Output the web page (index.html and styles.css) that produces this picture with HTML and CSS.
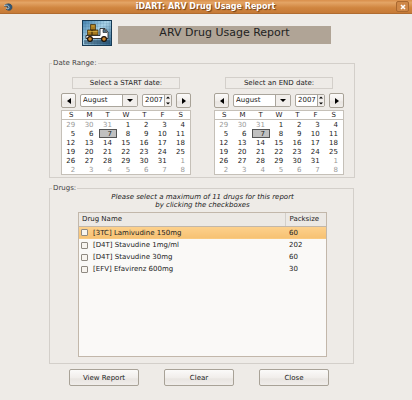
FILE: index.html
```html
<!DOCTYPE html>
<html lang="en">
<head>
<meta charset="utf-8">
<title>iDART: ARV Drug Usage Report</title>
<link rel="stylesheet" href="styles.css">
</head>
<body>
<header class="titlebar">
  <svg class="app-icon" viewBox="0 0 12 10" aria-hidden="true"><path d="M1 4C3 1 9 1 9 5S5 9 3 7C5 7 6 4 1 4Z" fill="#315878" stroke="#234158" stroke-width=".6"/><path d="M1 3.500c3-1 5 0 5 2S4 7 3 6" fill="none" stroke="#b8c5cc"/></svg>
  <h1 class="titlebar-text">iDART: ARV Drug Usage Report</h1>
  <button class="window-close" aria-label="Close window"><svg viewBox="0 0 6 6"><path d="M1 1l4 4M5 1L1 5" stroke="#fff" stroke-width="1.5"/></svg></button>
</header>
<main class="content">
  <div class="banner">
    <svg class="truck" viewBox="0 0 30 26" aria-hidden="true">
      <defs>
        <linearGradient id="sky" x1="0" y1="0" x2="1" y2="1"><stop offset="0" stop-color="#3f7fae"/><stop offset=".45" stop-color="#a9d3e8"/><stop offset="1" stop-color="#2c6088"/></linearGradient>
        <pattern id="grid" width="3" height="3" patternUnits="userSpaceOnUse"><path d="M0 0H3M0 0V3" stroke="#1d4a6b" stroke-opacity=".3" stroke-width=".7"/></pattern>
      </defs>
      <rect x=".5" y=".5" width="29" height="25" fill="url(#sky)" stroke="#173a54"/>
      <rect x="1" y="1" width="28" height="24" fill="url(#grid)"/>
      <path d="M2 20H28V24H2Z" fill="#123450" opacity=".45"/>
      <path d="M4 15.500H18V8.500H23L26 12V18.500H4Z" fill="#fff" stroke="#151515" stroke-width=".8"/>
      <path d="M21 9.500H23L25 12.500H21Z" fill="#54748a" stroke="#151515" stroke-width=".6"/>
      <path d="M5.500 10H10V15H5.500ZM10 10H16V15H10ZM8.500 4.500H13.500V10H8.500Z" fill="#a87b20" stroke="#3d2b08" stroke-width=".7"/>
      <path d="M9.500 6H12.500M6 11.500H15.500" stroke="#dab44a" stroke-width=".7"/>
      <g fill="#d08a30" stroke="#1a1208" stroke-width="1.200"><circle cx="8" cy="19" r="2.400"/><circle cx="22" cy="19" r="2.400"/></g>
    </svg>
    <h2 class="banner-title">ARV Drug Usage Report</h2>
  </div>

  <fieldset class="group">
    <legend>Date Range:</legend>
    <div class="dates">
      <section class="picker">
        <h3 class="picker-title">Select a START date:</h3>
        <div class="picker-controls">
          <button class="btn step" aria-label="Previous start month"><svg viewBox="0 0 4 6"><path d="M4 0V6L0 3Z"/></svg></button>
          <div class="combo"><select aria-label="Start month"><option>August</option></select><svg viewBox="0 0 6 3"><path d="M0 0H6L3 3Z"/></svg></div>
          <div class="spin"><input type="text" inputmode="numeric" value="2007" aria-label="Start year"><svg viewBox="0 0 6 10"><path d="M1 3H5L3 1ZM1 7H5L3 9Z"/></svg></div>
          <button class="btn step" aria-label="Next start month"><svg viewBox="0 0 4 6"><path d="M0 0V6L4 3Z"/></svg></button>
        </div>
        <table class="calendar">
          <thead><tr><th>S</th><th>M</th><th>T</th><th>W</th><th>T</th><th>F</th><th>S</th></tr></thead>
          <tbody>
            <tr><td class="out">29</td><td class="out">30</td><td class="out">31</td><td>1</td><td>2</td><td>3</td><td>4</td></tr>
            <tr><td>5</td><td>6</td><td class="today">7</td><td>8</td><td>9</td><td>10</td><td>11</td></tr>
            <tr><td>12</td><td>13</td><td>14</td><td>15</td><td>16</td><td>17</td><td>18</td></tr>
            <tr><td>19</td><td>20</td><td>21</td><td>22</td><td>23</td><td>24</td><td>25</td></tr>
            <tr><td>26</td><td>27</td><td>28</td><td>29</td><td>30</td><td>31</td><td class="out">1</td></tr>
            <tr><td class="out">2</td><td class="out">3</td><td class="out">4</td><td class="out">5</td><td class="out">6</td><td class="out">7</td><td class="out">8</td></tr>
          </tbody>
        </table>
      </section>
      <section class="picker">
        <h3 class="picker-title">Select an END date:</h3>
        <div class="picker-controls">
          <button class="btn step" aria-label="Previous end month"><svg viewBox="0 0 4 6"><path d="M4 0V6L0 3Z"/></svg></button>
          <div class="combo"><select aria-label="End month"><option>August</option></select><svg viewBox="0 0 6 3"><path d="M0 0H6L3 3Z"/></svg></div>
          <div class="spin"><input type="text" inputmode="numeric" value="2007" aria-label="End year"><svg viewBox="0 0 6 10"><path d="M1 3H5L3 1ZM1 7H5L3 9Z"/></svg></div>
          <button class="btn step" aria-label="Next end month"><svg viewBox="0 0 4 6"><path d="M0 0V6L4 3Z"/></svg></button>
        </div>
        <table class="calendar">
          <thead><tr><th>S</th><th>M</th><th>T</th><th>W</th><th>T</th><th>F</th><th>S</th></tr></thead>
          <tbody>
            <tr><td class="out">29</td><td class="out">30</td><td class="out">31</td><td>1</td><td>2</td><td>3</td><td>4</td></tr>
            <tr><td>5</td><td>6</td><td class="today">7</td><td>8</td><td>9</td><td>10</td><td>11</td></tr>
            <tr><td>12</td><td>13</td><td>14</td><td>15</td><td>16</td><td>17</td><td>18</td></tr>
            <tr><td>19</td><td>20</td><td>21</td><td>22</td><td>23</td><td>24</td><td>25</td></tr>
            <tr><td>26</td><td>27</td><td>28</td><td>29</td><td>30</td><td>31</td><td class="out">1</td></tr>
            <tr><td class="out">2</td><td class="out">3</td><td class="out">4</td><td class="out">5</td><td class="out">6</td><td class="out">7</td><td class="out">8</td></tr>
          </tbody>
        </table>
      </section>
    </div>
  </fieldset>

  <fieldset class="group">
    <legend>Drugs:</legend>
    <div class="drugs">
      <p class="hint">Please select a maximum of 11 drugs for this report<br>by clicking the checkboxes</p>
      <div class="list">
        <table class="drug-table">
          <thead><tr><th>Drug Name</th><th class="pack">Packsize</th></tr></thead>
          <tbody>
            <tr class="selected"><td><label><input type="checkbox">[3TC] Lamivudine 150mg</label></td><td class="pack">60</td></tr>
            <tr><td><label><input type="checkbox">[D4T] Stavudine 1mg/ml</label></td><td class="pack">202</td></tr>
            <tr><td><label><input type="checkbox">[D4T] Stavudine 30mg</label></td><td class="pack">60</td></tr>
            <tr><td><label><input type="checkbox">[EFV] Efavirenz 600mg</label></td><td class="pack">30</td></tr>
          </tbody>
        </table>
      </div>
    </div>
  </fieldset>

  <div class="actions">
    <button class="btn">View Report</button>
    <button class="btn">Clear</button>
    <button class="btn">Close</button>
  </div>
</main>
</body>
</html>
```
FILE: styles.css
```css
* { box-sizing: border-box; }

body {
  margin: 0;
  min-height: 100vh;
  background: #eeebe7;
  color: #222;
  font: 7px/8px "DejaVu Sans", sans-serif;
}

h1, h2, h3, p { margin: 0; font-size: inherit; font-weight: normal; }
svg { display: block; }
button, input, select { font: inherit; color: inherit; margin: 0; }

.titlebar {
  display: flex;
  align-items: center;
  height: 14px;
  padding: 0 3px;
  background: linear-gradient(#d98f4b, #e3a465 20%, #d0853f 60%, #c67a37);
  border-bottom: 1px solid #b06c30;
}
.app-icon { width: 12px; height: 10px; }
.titlebar-text {
  flex: 1;
  color: #fff;
  font-size: 8px;
  font-weight: bold;
  text-align: center;
  text-shadow: 1px 1px 1px #6b3c14;
}
.window-close {
  display: grid;
  place-items: center;
  width: 13px;
  height: 11px;
  padding: 0;
  background: #cf8848;
  border: 1px solid #a9682f;
  border-radius: 2px;
}
.window-close svg { width: 6px; height: 6px; }

.content { padding: 6px 57px 0 49px; }

.banner {
  display: flex;
  align-items: center;
  gap: 6px;
  padding: 0 24px 0 33px;
}
.truck { width: 30px; height: 26px; }
.banner-title {
  flex: 1;
  height: 18px;
  margin-top: 3px;
  background: #b0a496;
  font-size: 11px;
  line-height: 14px;
  text-align: center;
}

.group {
  min-width: 0;
  margin: 0;
  padding: 0 2px;
  border: 1px solid #d3cfca;
}
.group legend { padding: 0 1px; color: #444; }
.group + .group { margin: 6px 1px 0 0; }

.dates {
  display: flex;
  justify-content: space-between;
  padding: 10px 8px 2px 9px;
}
.banner + .group { margin-top: 13px; }
.picker { width: 130px; }
.picker-title {
  height: 12px;
  margin: 0 11px 4px;
  border: 1px solid #d3cfca;
  line-height: 10px;
  text-align: center;
}
.picker-controls {
  display: flex;
  justify-content: space-between;
  align-items: center;
  margin-bottom: 2px;
}

.btn {
  height: 17px;
  padding: 0;
  background: linear-gradient(#fbfaf9, #f1eeeb 50%, #e9e5e1 60%, #f0edea);
  border: 1px solid #a8a297;
  border-radius: 2px;
}
.step {
  display: grid;
  place-items: center;
  width: 15px;
  height: 15px;
}
.step svg { width: 4px; height: 6px; }

.combo, .spin {
  display: grid;
  align-items: center;
  height: 13px;
  border: 1px solid #aaa59c;
  border-radius: 2px;
  background: #fff;
}
.combo { grid-template-columns: 1fr 15px; width: 58px; }
.spin { grid-template-columns: 1fr 7px; width: 30px; }
.combo select, .spin input {
  appearance: none;
  grid-area: 1 / 1 / 2 / 3;
  width: 100%;
  height: 11px;
  padding: 0 2px;
  border: 0;
  background: none;
  line-height: 11px;
}
.combo svg, .spin svg {
  grid-area: 1 / 2;
  width: 100%;
  height: 11px;
  padding: 4px;
  border-left: 1px solid #aaa59c;
  background: #f1eeeb;
  pointer-events: none;
}
.spin svg { padding: 0; }

.calendar {
  width: 100%;
  border: 1px solid #c5c0b8;
  border-collapse: separate;
  border-spacing: 0;
  table-layout: fixed;
  background: #fff;
}
.calendar th {
  height: 9px;
  padding: 0;
  border-bottom: 1px solid #c5c0b8;
  font-weight: normal;
}
.calendar td {
  height: 9px;
  padding: 0 5px 0 0;
  text-align: right;
}
.calendar .out { color: #999; }
.calendar .today {
  background: #c0c0c0;
  box-shadow: inset 0 0 0 1px #555;
}

.drugs { padding: 1px 24px 6px 26px; }
.hint { font-style: italic; text-align: center; }
.list {
  min-height: 145px;
  margin-top: 3px;
  border: 1px solid #c2b7aa;
  background: #faf9f7;
}
.drug-table { width: 100%; border-collapse: collapse; }
.drug-table th {
  height: 13px;
  padding: 0 3px;
  border-bottom: 1px solid #c2b7aa;
  background: #ece9e5;
  font-weight: normal;
  text-align: left;
}
.drug-table td { height: 12px; padding: 0 2px; }
.drug-table .pack { width: 41px; padding-left: 4px; }
.drug-table th.pack { border-left: 1px solid #d3cfca; }
.drug-table .selected td {
  height: 13px;
  background: linear-gradient(#fdd18d, #f6c172);
}
.drug-table label { display: flex; align-items: center; gap: 5px; }
.drug-table input {
  appearance: none;
  width: 7px;
  height: 7px;
  border: 1px solid #8f8a82;
  border-radius: 1px;
  background: #f7f4ef;
}
.drug-table input:checked { background: #555; }

.actions {
  display: flex;
  justify-content: space-between;
  padding: 5px 26px 0 20px;
}
.actions .btn { width: 70px; }
```
